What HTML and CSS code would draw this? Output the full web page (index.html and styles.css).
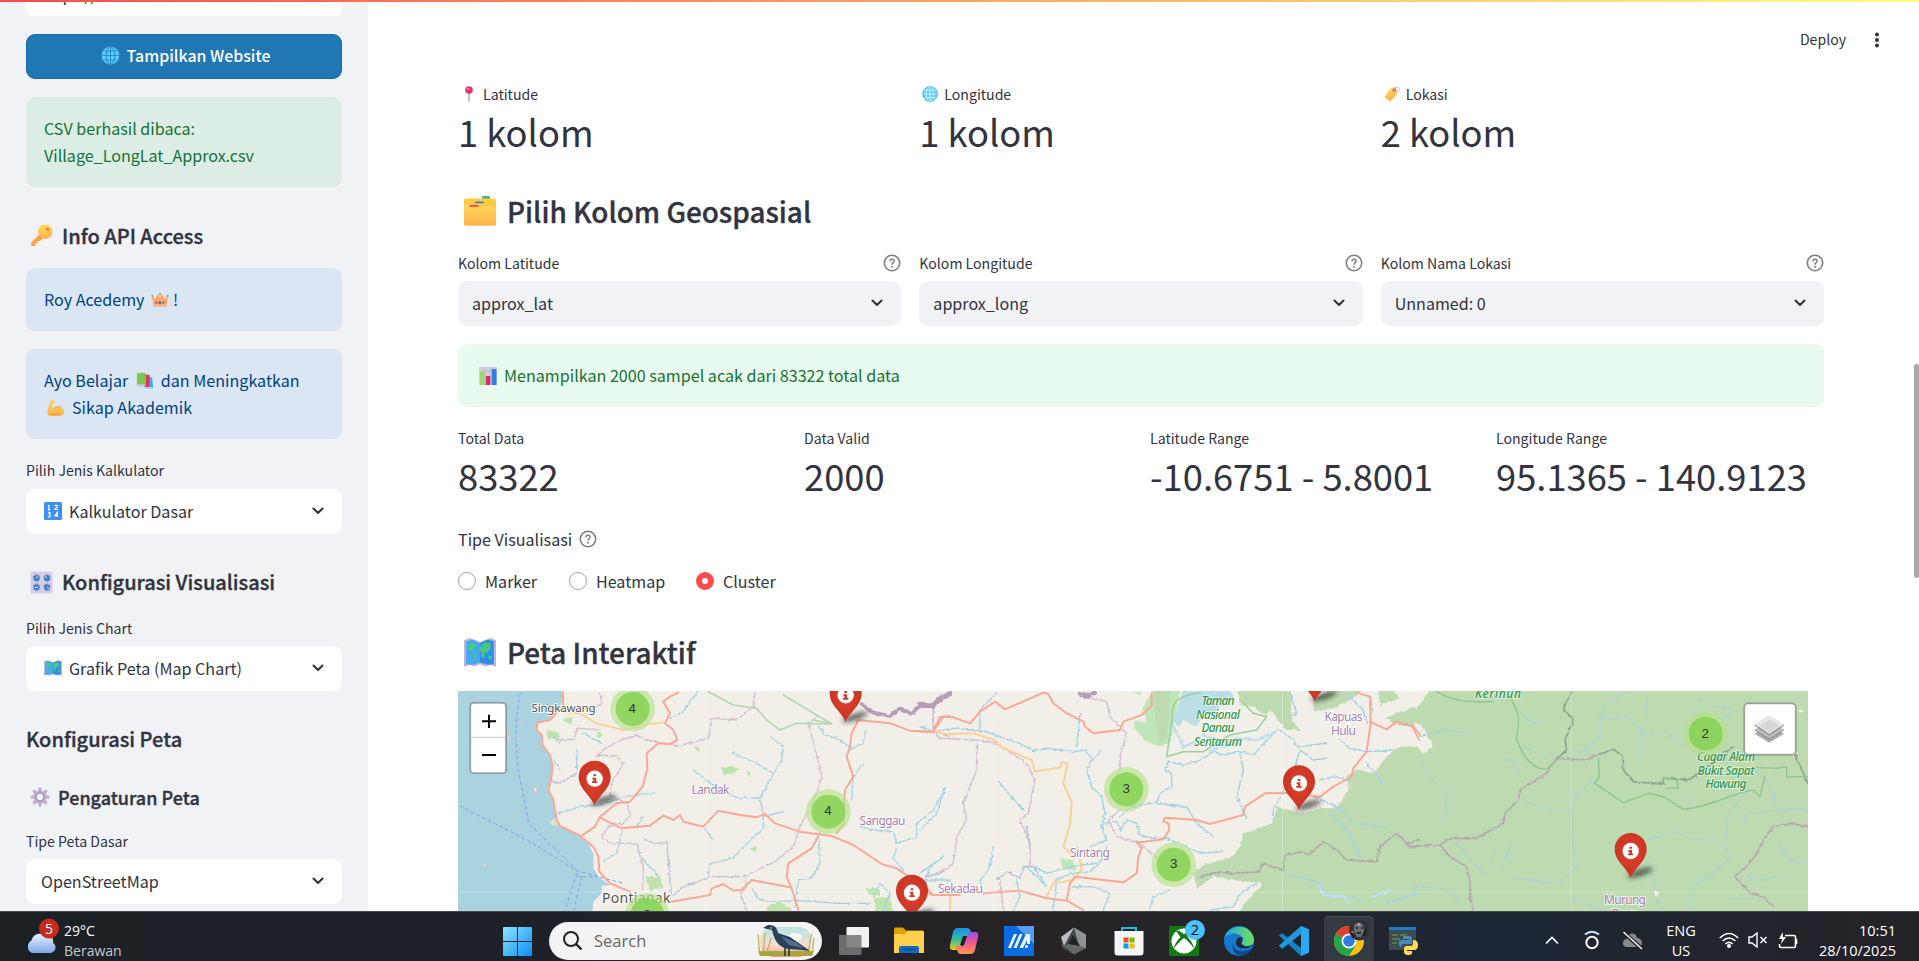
FILE: index.html
```html
<!DOCTYPE html>
<html lang="id">
<head>
<meta charset="utf-8">
<title>Peta Interaktif</title>
<link rel="stylesheet" href="styles.css">
</head>
<body>
<svg class="defs" width="0" height="0">
  <defs>
    <linearGradient id="gold" x1="0" y1="0" x2="0" y2="1"><stop offset="0" stop-color="#ffd85a"/><stop offset="1" stop-color="#ffb14e"/></linearGradient>
    <linearGradient id="winb" x1="0" y1="0" x2="1" y2="1"><stop offset="0" stop-color="#8be4ff"/><stop offset="1" stop-color="#0a8ff5"/></linearGradient>
    <linearGradient id="cop" x1="0" y1="0" x2="0" y2="1"><stop offset="0" stop-color="#1a8df0"/><stop offset=".5" stop-color="#2fbf9c"/><stop offset="1" stop-color="#f2c21b"/></linearGradient>
    <linearGradient id="cop2" x1="0" y1="0" x2="0" y2="1"><stop offset="0" stop-color="#a04df0"/><stop offset=".5" stop-color="#ee5a8e"/><stop offset="1" stop-color="#ff9a4a"/></linearGradient>
    <linearGradient id="edge" x1="0" y1="0" x2="1" y2="0"><stop offset="0" stop-color="#1fa7e0"/><stop offset="1" stop-color="#6fe05a"/></linearGradient>
    <linearGradient id="cloud" x1="0" y1="0" x2="0" y2="1"><stop offset="0" stop-color="#e8f1ff"/><stop offset="1" stop-color="#7fa9ea"/></linearGradient>
    <linearGradient id="sky" x1="0" y1="0" x2="0" y2="1"><stop offset="0" stop-color="#b5e6e3"/><stop offset=".6" stop-color="#f3ded0"/><stop offset="1" stop-color="#ef9d86"/></linearGradient>
    <symbol id="globe" viewBox="0 0 20 20"><circle cx="10" cy="10" r="9.4" fill="#5ccbfc"/><g fill="none" stroke="#d4f2ff" stroke-width="1.1"><ellipse cx="10" cy="10" rx="4.6" ry="9"/><path d="M10 1v18M1 10h18M2.5 5.3h15M2.5 14.7h15"/></g><circle cx="10" cy="10" r="9.2" fill="none" stroke="#38a9e4" stroke-width=".8"/></symbol>
    <symbol id="globe-dark" viewBox="0 0 20 20"><circle cx="10" cy="10" r="9.4" fill="#5ccbfc"/><g fill="none" stroke="#2a8fd0" stroke-width="1.1"><ellipse cx="10" cy="10" rx="4.6" ry="9"/><path d="M10 1v18M1 10h18M2.5 5.3h15M2.5 14.7h15"/></g></symbol>
    <symbol id="key" viewBox="0 0 24 24"><path d="M11.5 9.5 1 19.6 1.6 23h3.8v-2.8h2.4v-2.4h2.6l4-4z" fill="#ff9f45"/><circle cx="16" cy="8" r="7.6" fill="url(#gold)"/><circle cx="18.4" cy="5.4" r="1.7" fill="#d98a2e"/></symbol>
    <symbol id="crown" viewBox="0 0 20 18"><path d="M1 5 5 8 7 3 10 6 13 3 15 8 19 5 17 16H3z" fill="#f7a95c"/><path d="M3 14h14v2.6H3z" fill="#ffb38f"/><g fill="#e33b6b"><circle cx="6" cy="12" r="1.2"/><circle cx="14" cy="12" r="1.2"/></g><g fill="#d98a5c"><circle cx="1.5" cy="4.5" r="1.2"/><circle cx="18.5" cy="4.5" r="1.2"/><circle cx="10" cy="2.5" r="1.3"/></g><circle cx="10" cy="12" r="1.7" fill="#3f6fe6"/></symbol>
    <symbol id="books" viewBox="0 0 20 20"><path d="M11 5l7 1 1 12-8 1z" fill="#3fa9ea"/><path d="M10 3h5v13l-6 1z" fill="#e5305f"/><path d="M1 1h10v13H1z" fill="#7bc950"/><path d="M1 14h10l-1 2H2z" fill="#c9c2d6"/><path d="M9 17h9v1.6H9z" fill="#cfdcf5"/></symbol>
    <symbol id="arm" viewBox="0 0 20 20"><path d="M4 2C6 0 9 1 9 3L8 5l-2 .6L6 12c2-3 7-5 11-2 4 4 2 9-5 9H4c-4 0-4-4-3-8z" fill="url(#gold)"/><path d="M7 12c1-3 5-4 8-3M3 16c3 2 8 2 11 0" fill="none" stroke="#ee8f38" stroke-width="1"/></symbol>
    <symbol id="nums" viewBox="0 0 18 18"><rect width="18" height="18" rx="1.5" fill="#3f8ff3"/><path d="M5 3v4.6M4 4l1-.9M3.900 7.600h2.200M11 4c0-1.300 2.800-1.300 2.600.2 0 1-2.300 2-2.600 3.300h2.900M4 10.600c3-.8 2.500 2 .8 2.100 2.300 0 1.700 3-.9 2.300M13.300 15v-4.700l-2.400 3.300h3.200" fill="none" stroke="#fff" stroke-width="1.200"/></symbol>
    <symbol id="knobs" viewBox="0 0 24 24"><rect x=".5" y=".5" width="23" height="23" rx="2" fill="#d9cbe6"/><g fill="none" stroke="#6b5e80" stroke-width="1" stroke-dasharray="1 1.2"><path d="M3.400 6a4 4 0 0 1 7 0M14.200 6a4 4 0 0 1 7 0M3.400 15.500a4 4 0 0 1 7 0M14.200 15.500a4 4 0 0 1 7 0"/></g><g fill="#3c86d0"><circle cx="6.800" cy="7.600" r="3.300"/><circle cx="17.800" cy="7.600" r="3.300"/><circle cx="6.800" cy="17.200" r="3.300"/><circle cx="17.800" cy="17.200" r="3.300"/></g><path d="m6.500 7 2-1M17.500 7l-2-1.500M5 17.200h3M18 17l2 1.500" stroke="#fff"/></symbol>
    <symbol id="worldmap" viewBox="0 0 30 26" preserveAspectRatio="none"><path d="M0 2 5.500 0 10 1.500 15 3.500 20 1.500 25 0 30 2V26L25 24 20 25.500 15 23.500 10 25.500 5 24 0 26z" fill="#c2b2da"/><path d="M2 3 8 1.500 15 4.500V22L8 24 2 23.500z" fill="#44a9f3"/><path d="M15 4.500 22 1.500 28 3V23.500L22 24 15 22z" fill="#2b8ee8"/><path d="M3 6.500 7 4l5 2-2 4-3 2-3-2zM9 13l3 2-1.500 4L9 20.500zM15 8l4-4 6 1v4l-3 5-2-3-1 8-3-3 .500-3.500-2-1zM23 16h3v3l-3-.500z" fill="#47c885"/></symbol>
    <symbol id="gear" viewBox="0 0 22 22"><g stroke="#c3b5d3" stroke-width="4" stroke-linecap="round"><path d="M11 2.200v17.600M2.200 11h17.600M4.800 4.800l12.400 12.400M17.200 4.800 4.800 17.200"/></g><circle cx="11" cy="11" r="7" fill="#b9aaca"/><circle cx="11" cy="11" r="4.600" fill="#958aa3"/><circle cx="11" cy="11" r="3.500" fill="#f0f2f6"/></symbol>
    <symbol id="pin" viewBox="0 0 12 22"><path d="M6 9v12.500" stroke="#9a8da8" stroke-width="1.500"/><circle cx="6" cy="5.500" r="5.200" fill="#e8326d"/><circle cx="4.500" cy="4" r="1.600" fill="#ff80aa"/></symbol>
    <symbol id="tag" viewBox="0 0 18 18"><path d="M7 3 12 1l3 3-1 6-7 7.500-6.500-5z" fill="url(#gold)"/><circle cx="11.500" cy="4.500" r="2" fill="#e3536b"/><circle cx="14.600" cy="4" r="2.800" fill="none" stroke="#c7b5d6" stroke-width="1"/></symbol>
    <symbol id="folder" viewBox="0 0 32 30" preserveAspectRatio="none"><rect x="18" y="0" width="8" height="5" rx="1" fill="#46b978"/><rect x="0" y="2.500" width="32" height="27" rx="2" fill="#ffcb45"/><path d="M12 5.500h7l1.500 1.700h-10z" fill="#3b83d4"/><path d="M0 9h5l1.500 1.500H32v17a2 2 0 0 1-2 2H2a2 2 0 0 1-2-2z" fill="url(#gold)"/><path d="M6 9h8l1 1.700H5z" fill="#ef4056"/></symbol>
    <symbol id="chart" viewBox="0 0 18 18"><rect width="18" height="18" fill="#d6cde0"/><path d="M0 4h18M6 0v18M12 0v18" stroke="#b9acc9" stroke-width=".6"/><rect x="1" y="4.500" width="4.500" height="13.500" fill="#99dd68"/><rect x="6.800" y="9" width="4.500" height="9" fill="#d92d67"/><rect x="12.800" y="2" width="4.700" height="16" fill="#2b83df"/></symbol>
    <symbol id="chev" viewBox="0 0 12 8"><path d="M1.500 1.500 6 6l4.500-4.500" fill="none" stroke="#31333f" stroke-width="2.100" stroke-linecap="round" stroke-linejoin="round"/></symbol>
    <symbol id="help" viewBox="0 0 18 18"><circle cx="9" cy="9" r="7.700" fill="none" stroke="#7c7d86" stroke-width="1.600"/><path d="M6.900 7.200c.1-2.800 4.300-2.600 4.200-.1-.1 1.600-2 1.600-2.100 3.500" fill="none" stroke="#7c7d86" stroke-width="1.500"/><circle cx="9" cy="12.700" r="1" fill="#7c7d86"/></symbol>
    <filter id="wig" x="-5%" y="-5%" width="110%" height="110%" color-interpolation-filters="sRGB"><feTurbulence type="fractalNoise" baseFrequency=".09" numOctaves="3" seed="4"/><feDisplacementMap in="SourceGraphic" scale="11" xChannelSelector="R" yChannelSelector="G"/></filter>
    <filter id="soft" x="-50%" y="-100%" width="200%" height="300%"><feGaussianBlur stdDeviation="8"/></filter>
    <radialGradient id="red" cx=".5" cy=".45" r=".6"><stop offset="0" stop-color="#db422e"/><stop offset="1" stop-color="#c8321f"/></radialGradient>
    <g id="mk"><ellipse cx="28" cy="-15" rx="40" ry="10" transform="rotate(-18 28 -15)" fill="#222" opacity=".7" filter="url(#soft)"/><path d="M0 0C-12-30-48-50-48-86A48 48 0 0 1 48-86C48-50 12-30 0 0z" fill="url(#red)"/><circle cy="-80" r="24.500" fill="#fff"/><path d="M-4-93h8v6h-8zM-7-83H4v11h4v5H-8v-5h4v-6h-3z" fill="#d03a28"/></g>
    <g id="cl"><circle r="67" fill="#b5e28c" opacity=".65"/><circle r="51" fill="#84d250" opacity=".82"/></g>
  </defs>
</svg>

<div class="stripe"></div>
<div class="app">
  <aside class="sidebar">
    <div class="cut"><span>https://</span></div>
    <div class="button"><svg class="e19"><use href="#globe-dark"/></svg><b>Tampilkan Website</b></div>
    <div class="alert ok">CSV berhasil dibaca:<br>Village_LongLat_Approx.csv</div>
    <h3 class="h-info"><svg class="e24"><use href="#key"/></svg>Info API Access</h3>
    <div class="alert info">Roy Acedemy <svg class="e18 crown"><use href="#crown"/></svg>!</div>
    <div class="alert info">Ayo Belajar <svg class="e18 book"><use href="#books"/></svg>dan Meningkatkan<br><svg class="e18 arm"><use href="#arm"/></svg>Sikap Akademik</div>
    <label class="l1">Pilih Jenis Kalkulator</label>
    <div class="select white ico"><svg class="e18"><use href="#nums"/></svg><span>Kalkulator Dasar</span><svg class="chev"><use href="#chev"/></svg></div>
    <h3 class="h-vis"><svg class="e24"><use href="#knobs"/></svg>Konfigurasi Visualisasi</h3>
    <label class="l2">Pilih Jenis Chart</label>
    <div class="select white ico"><svg class="e18"><use href="#worldmap" y="1" height="16"/></svg><span>Grafik Peta (Map Chart)</span><svg class="chev"><use href="#chev"/></svg></div>
    <h3 class="h-peta">Konfigurasi Peta</h3>
    <h4><svg class="e20"><use href="#gear"/></svg>Pengaturan Peta</h4>
    <label class="l3">Tipe Peta Dasar</label>
    <div class="select white"><span>OpenStreetMap</span><svg class="chev"><use href="#chev"/></svg></div>
  </aside>

  <main class="main">
    <header><span>Deploy</span><svg width="6" height="16"><g fill="#31333f"><circle cx="3" cy="2.500" r="2"/><circle cx="3" cy="8" r="2"/><circle cx="3" cy="13.500" r="2"/></g></svg></header>
    <section class="content">
      <div class="cols3 metrics top">
        <div><p><svg class="m"><use href="#pin"/></svg>Latitude</p><strong>1 kolom</strong></div>
        <div><p><svg class="m"><use href="#globe"/></svg>Longitude</p><strong>1 kolom</strong></div>
        <div><p><svg class="m"><use href="#tag"/></svg>Lokasi</p><strong>2 kolom</strong></div>
      </div>
      <h2><svg width="32" height="30"><use href="#folder"/></svg>Pilih Kolom Geospasial</h2>
      <div class="cols3 picks">
        <div><label>Kolom Latitude<svg class="help"><use href="#help"/></svg></label><div class="select"><span>approx_lat</span><svg class="chev"><use href="#chev"/></svg></div></div>
        <div><label>Kolom Longitude<svg class="help"><use href="#help"/></svg></label><div class="select"><span>approx_long</span><svg class="chev"><use href="#chev"/></svg></div></div>
        <div><label>Kolom Nama Lokasi<svg class="help"><use href="#help"/></svg></label><div class="select"><span>Unnamed: 0</span><svg class="chev"><use href="#chev"/></svg></div></div>
      </div>
      <div class="alert sample"><svg class="e18"><use href="#chart"/></svg><span>Menampilkan 2000 sampel acak dari 83322 total data</span></div>
      <div class="cols4 metrics">
        <div><p>Total Data</p><strong>83322</strong></div>
        <div><p>Data Valid</p><strong>2000</strong></div>
        <div><p>Latitude Range</p><strong>-10.6751 - 5.8001</strong></div>
        <div><p>Longitude Range</p><strong>95.1365 - 140.9123</strong></div>
      </div>
      <div class="tipe">Tipe Visualisasi<svg class="help"><use href="#help"/></svg></div>
      <div class="radios"><span class="r1"><i></i>Marker</span><span class="r2"><i></i>Heatmap</span><span><i class="on"></i>Cluster</span></div>
      <h2 class="peta"><svg width="32" height="29"><use href="#worldmap"/></svg>Peta Interaktif</h2>

      <svg class="map" viewBox="458 691 1350 220">
        <rect x="458" y="691" width="1350" height="220" fill="#f2efe9"/>
        <g transform="translate(450 680) scale(.33333)" fill="none" stroke-linejoin="round" stroke-linecap="round">
          <path d="M0 0H332L338 60 325 95 300 118 262 126 258 150 276 165 278 195 300 225 308 260 303 295 295 330 310 360 316 408 325 438 390 467 418 495 430 522 430 565 447 592 480 615 455 618 455 640 430 665 426 720H0z" fill="#aad3df"/>
          <path d="M300 425l16-12 8 22-20 2z" fill="#d5e8c8"/>
          <g fill="#e9e0dc" stroke="#d9b9c4" stroke-width="2"><circle cx="213" cy="127" r="4"/><path d="M170 150l8 20 2 15-6-3zM250 325l8-5 4 12-6 8zM188 408l5-3v8z"/><circle cx="104" cy="556" r="4"/><circle cx="203" cy="175" r="4"/></g>
          <g fill="#bfe3ad" filter="url(#wig)"><path d="M288 150l40 8-5 20-30-3zM340 112l28 2-5 18-20-3zM440 155l20 5-6 14-14-4zM900 500l22 2-8 14zM586 590l45 0 8 35-40 5zM735 200h14v14h-14zM815 265l40-8 15 12-15 8-35 8zM893 268l12 20h-12zM950 680l40-15 35 25v30h-75zM1250 625l40 0v20h-35zM1270 655l50-5 10 50h-50z"/><path d="M520 50l50-20 10 60-40 10z"/></g>
          <g stroke="#89a0ee" stroke-width="3" stroke-dasharray="9 10"><path d="M211 40C195 120 195 200 205 270L236 430 380 570M30 378L240 485 380 572 520 610M380 580 345 690M395 590 372 690M380 590h60"/></g>
          <g stroke="#a5d3e3" stroke-width="4" filter="url(#wig)">
            <path d="M745 35L720 65 700 95 660 115M520 48L560 80M400 160l55 30M310 170l20 20M315 240l15 30M380 210v60M325 400L400 378 450 375 520 350 615 338M460 545l40-25 15-65M560 440l20-30M570 530l60 60M730 270L780 310 830 340 860 352 930 354M845 217L930 255 970 282M962 170L1000 200 995 240 960 300 930 355 940 400 940 445 880 500 850 535 780 550 775 590M940 410L1000 395M1105 470L1110 550 1085 595 1045 600 1035 680M765 445L788 480M1105 140L1125 165 1160 175 1205 205 1240 190 1248 150M1240 250L1210 290 1205 360M1230 440L1270 450 1330 455 1340 490 1400 470 1400 430 1450 390 1485 325M1340 500L1330 535 1360 570M1430 580L1430 610 1360 640M1480 530L1440 560 1430 590M1270 650L1290 610 1320 640 1300 690M905 625L930 660 980 665 1040 662 1100 665 1160 670 1260 670M1480 570L1440 590"/>
          </g>
          <g stroke="#b9c0d9" stroke-width="4" filter="url(#wig)"><path d="M665 650L700 620 770 595M300 300L330 310 380 280M650 490L660 600 665 650"/></g>
          <g stroke="#d3bfd0" stroke-width="4" filter="url(#wig)"><path d="M450 40L455 70 410 100M320 180L375 178 380 145 450 150M440 230L460 210 500 185 560 165 590 180 680 198 775 175 785 115 860 120 910 80 915 30M440 225L500 228 520 250 485 310 480 345 530 370 542 405 520 430 480 435 455 470 480 490 560 490 580 560 578 630M580 475L610 490 650 488M775 590L880 590 975 545 1030 500 1050 440 1100 340 1115 290 1095 205 1075 130 1100 110M885 590L890 620 870 640 890 690M1450 80v70l50 20"/></g>
          <g stroke="#b2d9b2" stroke-width="5"><path d="M775 35L850 75 920 85 950 120 990 150 1040 130 1145 132 1000 45M1145 132L1090 120"/></g>
          <path d="M1235 72L1270 98 1320 108 1350 85 1385 102 1415 70 1450 80 1465 55 1500 40" stroke="#b79db7" stroke-width="11" filter="url(#wig)"/>
          <g stroke="#fbcf90" stroke-width="5"><path d="M330 95L390 100 440 130 520 150 600 132 640 128"/></g>
          <g stroke="#f8a896" stroke-width="6"><path d="M338 35L340 75 300 120 262 128 260 150 275 165 278 195 300 225 308 260 303 300 295 330 310 360 320 420 330 438 390 467 430 500 445 530 448 575 480 610 540 635M685 38L660 50 640 65 660 100 645 130 670 150 682 180 660 192 625 190 590 220 592 265 578 320 540 365 500 370 450 410 435 440 395 467M450 413L515 445 600 437 640 407 670 420 690 405 700 425 760 440 805 392 870 405 920 412 945 402 975 430 1050 455 1145 468 1210 495 1295 552 1340 565 1390 600 1445 645M1110 460L1085 505 1015 550 1010 590 1030 640 1045 690M665 665L780 645 785 625 820 612 850 632 875 630 905 600 1020 622M1500 108L1480 110 1450 155 1380 152 1320 130 1225 120 1205 160 1200 200 1190 230 1210 290 1185 330 1182 370 1182 430 1160 460"/></g>
        </g>
        <g transform="translate(920 680) scale(.33333)" fill="none" stroke-linejoin="round" stroke-linecap="round">
          <g fill="#bddab1" filter="url(#wig)"><path d="M940-40H1110L1115 120 1140 150 1095 150 1050 85 1040 110 1000 80 960 75zM1180 60L1230 30H1330L1290 60 1240 85 1180 95zM1370-40H2700V760H940L965 680 1030 610 940 600 880 590 830 625 820 580 850 555 940 530 960 500 970 460 1060 430 1070 380 1150 400 1200 385 1250 385 1285 330 1280 290 1310 270 1360 285 1400 230 1450 195 1500 200 1500 130 1450 125 1400 115 1450 95 1480 80 1490 50 1440 55 1380 75z"/></g>
          <path d="M1425 390L1350 340 1285 290 1310 268 1360 280 1400 240z" fill="#bddab1"/>
          <path d="M700 30H780L750 190 720 200 680 185 640 140 645 120 680 130 670 80zM420 535l40 5 10 30-40 0zM640 35h25l-5 12z" fill="#bfe6b8" filter="url(#wig)"/>
          <path d="M700 30h50l-8 140-25 20-10-60z" fill="#bddab1"/>
          <path d="M790 30L930 30 945 60 900 75 890 110 850 95 830 140 790 120 775 140 760 120z" fill="#aed9e3" filter="url(#wig)" opacity=".8"/>
          <path d="M1370 115L1480 120 1515 150 1540 200 1500 230 1420 205 1350 225 1360 120zM1420 30h110l-40 55-30-10-20-20z" fill="#f2efe9" filter="url(#wig)"/>
          <path d="M1395 115l50-22 40 15v30h-40zM1400 230l40-30 50 0 30 30-60 40z" fill="#bddab1" filter="url(#wig)"/>
          <g stroke="#a5d3e3" stroke-width="4.500" filter="url(#wig)">
            <path d="M0 140L40 155 100 145 200 155 250 175 300 190 340 212 380 205 460 215 500 210 515 240 500 270 515 320 545 350 555 400 545 440 560 480 510 500M230 40L180 90 180 150M480 100L470 200M545 210L520 240M235 305L270 345 310 390M75 325L50 400 0 450M555 430L590 425 600 450 620 420 650 430 660 465 700 475 740 475 800 500 840 520 910 515M0 580L70 530M10 600L90 600M220 500L210 560 180 605 190 640M600 410L630 380 690 370 800 380 830 430 880 470M710 370L720 340 755 320 755 280 735 270 745 245 790 255 840 240 880 215 910 225 960 215 1000 225 1070 150M960 220L970 270 950 350 980 415M1080 150L1120 180 1140 210 1125 260 1120 310M1140 210L1180 240 1220 235M1110 40L1130 100 1110 110M1140 200L1220 190M1110 300L1060 390 1060 440M1200 300L1240 290 1300 300M1260 180L1290 205 1340 215 1420 210M1180 350L1250 380 1300 430 1400 440M1230 400L1290 460 1320 530M1340 250L1390 310M1090 585L1140 590 1200 610 1220 650 1290 650 1330 670M750 630L700 650 690 690M1010 610L960 640 940 680 870 690M290 600L300 650 280 690M400 690L410 600 450 580 510 575 540 550 560 500M460 620L520 620 570 640 550 690M320 560L380 620 340 560 380 580 450 560 530 550M1400 670L1500 640M1350 50L1360 100M1280 40L1330 90 1340 130"/>
          </g>
          <path d="M850 165L900 190 950 175 1010 180 1060 160M870 215L900 200 960 190M760 140l30 60 50-20M1195 620l20 25 60 5 10 20M1360 650l50-20" stroke="#bfe0ea" stroke-width="8" filter="url(#wig)"/>
          <g stroke="#d3bfd0" stroke-width="4.500" filter="url(#wig)"><path d="M40 90L40 150 60 175 170 180 230 190 320 250 345 300 325 400 300 420 330 490 330 560M170 190L170 270 130 370 140 420 110 470 100 550 60 580 20 590M485 50L560 65 570 110 620 160 600 230 600 270M600 390L565 420 590 470 660 490 720 540M240 600L250 690"/></g>
          <path d="M840 590L900 575 940 580 1020 575 1025 550 1090 570 1095 525 1150 515 1165 525 1210 485 1250 510 1280 540 1370 545 1380 500 1430 460 1460 490 1500 480" stroke="#b1aaa9" stroke-width="5" filter="url(#wig)"/>
          <path d="M230 600L265 575 300 595 310 560 345 560M320 440L330 500" stroke="#b9c0d9" stroke-width="5" filter="url(#wig)"/>
          <path d="M0 72L20 80 40 75 90 40M480 40L495 50 525 38" stroke="#b79db7" stroke-width="13" filter="url(#wig)"/>
          <g stroke="#9bcea0" stroke-width="4.500"><path d="M840 38C740 50 760 90 755 130L740 230 790 215 850 215 890 190 930 165 1010 150 1040 110 1000 100 970 70"/></g>
          <g stroke="#fbcf90" stroke-width="5.500"><path d="M40 155L80 162 160 160 225 180 240 200 335 240 345 275 420 262 425 247 443 250 430 310 455 365 450 435 430 500 450 520M480 540L485 570 460 600 400 610 380 650M90 640L90 690"/></g>
          <g stroke="#f8a896" stroke-width="6"><path d="M0 155H40L60 110 100 112 150 130 180 95 225 65 255 88 370 38 385 42 400 70 435 97 490 125 495 140 520 160 600 150 610 125 665 105 695 78 695 40M0 605L40 645 120 645M190 640L300 632 380 655 440 662 450 610 465 590 530 598 610 607 650 580 655 530 665 505 650 488 730 478 748 450 745 430 730 425 735 413 830 420 870 432 970 405 975 380 1035 340 1100 338 1200 350 1240 320 1295 290 1300 265 1340 215 1352 130 1350 50 1310 38M1350 125L1400 148 1430 125 1480 140 1500 165M440 662L490 690"/></g>
        </g>
        <g transform="translate(1400 680) scale(.33333)" fill="none" stroke-linejoin="round" stroke-linecap="round">
          <path d="M0 130L35 137 58 180" stroke="#f8a896" stroke-width="5"/>
          <g stroke="#add3d2" stroke-width="4" filter="url(#wig)"><path d="M60 170L130 150 220 160M60 240L90 290 135 330 140 390 125 430M370 110L400 130 430 120M370 200L440 235M480 215L550 215 600 170 600 120 680 110 740 160 800 160 850 195M600 110L620 70 680 40M740 50L740 110M720 150L720 240M900 60L930 75 990 85M960 120L1010 90M370 360L440 390 480 395 510 390 530 340 590 300M520 400L520 500 540 550 500 590 480 610 400 600 340 595M170 490L230 560 250 580M280 560L280 500M300 570L330 500M0 620L80 620 160 640 180 680M500 650L560 670 600 690M740 540L760 590 760 640 790 690M740 480L830 455 880 480 920 475 970 490 990 530 960 560M960 560L930 590 870 620 870 690M980 480L980 410 1040 335M1060 270L1110 310 1130 380 1220 390M1030 430L1040 400 1180 390M1040 590L1100 600 1160 580M1140 500L1170 540 1220 550M980 655L1060 655M870 350V400M310 240L340 240 360 290"/></g>
          <g stroke="#b8a7b1" stroke-width="5" filter="url(#wig)"><path d="M0 470L30 500 120 495 150 475 230 475 310 430 315 400 355 360 360 330 440 280 470 235 560 240 600 220M120 495L150 530 200 560 210 610 210 650 220 690M1224 440L1170 430 1120 440 1090 480 1070 520 1040 560 1005 590 1050 640 1090 650 1120 680"/></g>
          <path d="M515 35L490 85 520 120 495 180 500 210 470 235M600 222L640 208 670 230 670 270 700 305 790 312 790 295 820 295 860 300 900 280 970 220 1000 200M1185 225L1224 310" stroke="#8fa68e" stroke-width="5.500" filter="url(#wig)"/>
          <path d="M110 35C170 70 220 65 280 65M335 60C370 120 350 140 350 180C370 230 400 270 440 268L470 240M595 235L598 290 585 310 670 368 745 340 790 350 850 388C940 380 990 340 1060 330L1080 350 1095 290M1060 262L1130 265 1160 260 1160 290 1224 290M790 295L830 300 835 325 800 325" stroke="#8fc88f" stroke-width="4.500"/>
          <path d="M760 632l18 4-10 18zM1190 90h22l-6 8z" fill="#f2efe9"/>
        </g>
        <path d="M706 691v220M994.500 691v220M1282.500 691v220M1571 691v220M458 892h1350" stroke="#fff" stroke-opacity=".25" stroke-width="1"/>
        <g class="places">
          <g class="city"><text x="531.500" y="711.500" textLength="64">Singkawang</text><text class="big" x="602" y="902.500" textLength="68.500">Pontianak</text></g>
          <g class="district" text-anchor="middle"><text x="710.500" y="793.500" textLength="38">Landak</text><text x="882.500" y="825" textLength="46">Sanggau</text><text x="1090" y="857" textLength="40">Sintang</text><text x="960.500" y="893" textLength="45">Sekadau</text><text x="1343.500" y="721" textLength="38">Kapuas</text><text x="1343.500" y="734.500" textLength="25">Hulu</text><text x="1625" y="904" textLength="42">Murung</text><text x="1625" y="918">Raya</text></g>
          <g class="park" text-anchor="middle"><text x="1218" y="705" textLength="33">Taman</text><text x="1218" y="718.500" textLength="44">Nasional</text><text x="1218" y="732" textLength="33">Danau</text><text x="1218" y="745.500" textLength="48">Sentarum</text><text x="1498" y="697.500" textLength="46">Kerihun</text><text x="1726" y="761" textLength="58">Cagar Alam</text><text x="1726" y="774.500" textLength="57">Bukit Sapat</text><text x="1726" y="788" textLength="41">Hawung</text></g>
        </g>
        <g transform="translate(450 680) scale(.33333)">
          <use href="#cl" x="548" y="87"/><use href="#cl" x="1135" y="395"/><use href="#cl" x="592" y="706"/><use href="#cl" x="2029" y="328"/><use href="#cl" x="2171" y="554"/><use href="#cl" x="3767" y="161"/>
          <g class="count"><text x="547" y="99">4</text><text x="1134" y="405">4</text><text x="592" y="716">8</text><text x="2029" y="339">3</text><text x="2171" y="565">3</text><text x="3766" y="174">2</text></g>
          <use href="#mk" x="434" y="376"/><use href="#mk" x="1187" y="126"/><use href="#mk" x="1386" y="718"/><use href="#mk" x="2547" y="390"/><use href="#mk" x="2594" y="64"/><use href="#mk" x="3542" y="593"/>
          <rect x="61" y="69" width="107" height="210" rx="10" fill="#fff" stroke="#00000055" stroke-width="5"/><path d="M63 172h103" stroke="#ccc" stroke-width="3"/><path d="M96 124h42M117 104v40M96 225h42" stroke="#000" stroke-width="6"/>
          <rect x="3883" y="70" width="154" height="154" rx="12" fill="#fff" stroke="#00000055" stroke-width="5"/>
          <g transform="translate(3958 0)"><path d="M-44 161 0 132 44 161 0 188z" fill="#a9a9a9"/><path d="M-44 148 0 120 44 148 0 177z" fill="#bbb" stroke="#fff" stroke-width="3"/><path d="M-44 133 0 105 44 133 0 162z" fill="#e6e6e6"/><path d="M-30 137 0 119 30 137 0 156z" fill="#d6d6d6"/><path d="M-44 135 0 164 44 135M-44 149 0 177 44 149" fill="none" stroke="#777" stroke-width="3"/></g>
        </g>
      </svg>
    </section>
    <div class="scroll"></div>
  </main>
</div>

<footer class="taskbar">
  <div class="weather"><svg width="36" height="38" viewBox="0 0 36 38"><rect x="22" y="15" width="7" height="10" fill="#e78423"/><path d="M8 35a7 7 0 0 1-.5-12.500C9 15 19 13 22 20c7-1 8 4 7 5 5 3 2 10-3 10z" fill="url(#cloud)"/><circle cx="25" cy="10.500" r="10" fill="#c62b1c"/><text x="25" y="15.500" text-anchor="middle" class="five">5</text></svg><div>29°C<br><small>Berawan</small></div></div>
  <svg class="win" viewBox="0 0 29 29"><path d="M0 1q0-1 1-1h13v14H0zM15 0h13q1 0 1 1v13H15zM0 15h14v14H1q-1 0-1-1zM15 15h14v13q0 1-1 1H15z" fill="url(#winb)"/></svg>
  <div class="search"><svg width="20" height="20" viewBox="0 0 20 20"><circle cx="8" cy="8" r="7" fill="none" stroke="#222" stroke-width="2"/><path d="m13 13 5.500 5.500" stroke="#222" stroke-width="2.400"/></svg><span>Search</span>
    <svg width="58" height="34" viewBox="0 0 58 34"><rect x="3" y="3" width="52" height="30" rx="14" fill="url(#sky)"/><ellipse cx="38" cy="13" rx="7" ry="4" fill="#fff" opacity=".8"/><path d="M1 27h56l-2 5H3z" fill="#a7a53c"/><path d="M3 28C1 22 2 15 1 10M6 28C8 20 6 12 9 9M10 28l4-14M51 28c2-8 2-14 4-18M55 28c2-7 1-10 2-14" fill="none" stroke="#c8ae63" stroke-width="1.300"/><path d="M6 4 10 1.500C16 0 20 3 21 9l12 4 13 9 7 5-9-1-13-1C20 23 17 14 15 6z" fill="#2b405a"/><path d="M24 12 40 19 46 24 32 21z" fill="#53718b"/><path d="M28 24v8M32 24v8" stroke="#25313f" stroke-width="1.500"/><circle cx="14" cy="4" r="1" fill="#d49762"/></svg></div>
  <div class="apps">
    <span><svg viewBox="0 0 30 28"><rect x="7.500" width="22.500" height="20.500" rx="1" fill="#f2f2f2"/><rect y="8" width="22.500" height="20" rx="1" fill="#777" opacity=".88"/></svg></span>
    <span><svg viewBox="0 0 30 28"><path d="M0 2q0-1.500 1.500-1.500H9L12 3.500H28.500q1.500 0 1.500 2V14H0z" fill="#dea000"/><path d="M0 7H11l3-3H28.500q1.500 0 1.500 1.500V26H0z" fill="#ffd04d"/><path d="M5 26v-5q0-2 2-2h16q2 0 2 2v5z" fill="#0c6bc2"/><path d="M8.500 22.500h13" stroke="#04427d" stroke-width="1.200"/></svg></span>
    <span><svg viewBox="0 0 30 28"><path d="M9 1h9q3 0 4 4l1 4h-7l-5 12q-1 2-4 2H4q-4 0-3-5L4 5q1-4 5-4z" fill="url(#cop)"/><path d="M21 27h-9q-3 0-4-4l-1-4h7l5-12q1-2 4-2h3q4 0 3 5L26 23q-1 4-5 4z" fill="url(#cop2)"/><path d="M14 9h4l-3 9h-4z" fill="#20222b"/></svg></span>
    <span><svg viewBox="0 0 30 30"><rect width="30" height="30" fill="#0b6be0"/><path d="M12 0h18v18z" fill="#559fee"/><path d="M10 8h3L7 22H4zM15.500 8h3L12.500 22h-3zM22 8h4v10h-3v-4l-4 8h-3.500z" fill="#eaf3ff"/><circle cx="22.500" cy="20.500" r="1.500" fill="#fff"/></svg></span>
    <span><svg viewBox="0 0 30 30"><path d="M15 1.500 27 8.500V22L15 28.500 3 22 2 11z" fill="#44474b"/><path d="M15 1.500 27 8.500V22l-6 1z" fill="#8f9297"/><path d="M15 1.500 2 11 5 20z" fill="#b9bbbe"/><path d="M14 9 21 20 9 18z" fill="#202226"/><path d="m5 20 4-2 12 2 6 2-12 6.500z" fill="#63666a"/></svg></span>
    <span><svg viewBox="0 0 30 30"><path d="M8 7V2h14v5" fill="none" stroke="#25b7ea" stroke-width="2"/><path d="M.500 5h29v21q0 3.500-3 3.500h-23q-3 0-3-3.500z" fill="#f5f5f5"/><path d="M9.500 11.500h5v5h-5z" fill="#f04f23"/><path d="M15.500 11.500h5v5h-5z" fill="#7eb900"/><path d="M9.500 17.500h5v5h-5z" fill="#00a3ee"/><path d="M15.500 17.500h5v5h-5z" fill="#ffb700"/></svg></span>
    <span><svg class="xbox" viewBox="0 0 36 36"><rect y="6" width="30" height="30" rx="1.500" fill="#107c10"/><circle cx="15" cy="21" r="12.500" fill="#fff"/><path d="M7 11c3-1 6 1.500 8 3.200C17 12.500 20 10 23 11l-4.500 6c3.500 3.500 6 8 7 12C22 24 18 20 15 18c-3 2-7 6-10.500 11 1-4 3.500-8.500 7-12z" fill="#107c10"/><circle cx="26" cy="10" r="10" fill="#4cc2ff"/><text x="26" y="15" text-anchor="middle" class="two">2</text></svg></span>
    <span><svg viewBox="0 0 30 30"><circle cx="15" cy="15" r="15" fill="#1479d0"/><path d="M0 14C1-1 26-6 30 13c1 6-7 9-11 6-3-3 2-4-1-8C13 5 2 7 0 14z" fill="url(#edge)"/><path d="M10 15c-3 9 7 14 18 7-5 12-25 9-18-7z" fill="#114a8b"/><path d="M18 11c2 4-2 5 0 7.500 3 3 9 1.500 11 0-2 5-19 6-17-3 1-4 4-5 6-4.500z" fill="#20222b" opacity=".9"/></svg></span>
    <span><svg viewBox="0 0 30 30"><path d="M22 0 30 3.500V26.500L22 30 2 11.500 0 9.500 3 7 22 22z" fill="#1583c9"/><path d="M22 0 0 19.500 3 23 22 8z" fill="#1f9ae0"/><path d="M22 0 30 3.500V26.500L22 30z" fill="#2aa8f2"/></svg></span>
    <span class="active"><svg class="chrome" viewBox="0 0 36 36"><circle cx="15" cy="21" r="15" fill="#fbc116"/><path d="M15 21 2 13.500A15 15 0 0 1 28 13.500z" fill="#e33b2e"/><path d="M2 13.500A15 15 0 0 0 15 36l7-11-7-4z" fill="#27a34a"/><circle cx="15" cy="21" r="7.500" fill="#fff"/><circle cx="15" cy="21" r="5.800" fill="#2c7be5"/><circle cx="25.500" cy="10" r="10.500" fill="#303236"/><path d="M20 5q5-5 9 0l1 6-3 6h-4l-3-6z" fill="#6d6c70"/><path d="M22 8h2m3 0h2M23 13h4M17 13l3 4m12-7-2 6" stroke="#17181b" stroke-width="1.600" fill="none"/><circle cx="25" cy="4.500" r="1.500" fill="#a9a2a2"/><circle cx="18.500" cy="12" r="1.300" fill="#b85a51"/></svg></span>
    <span><svg viewBox="0 0 30 30"><path d="M0 1h27v23H0z" fill="#3f4b50"/><path d="M0 1h27v3H0z" fill="#1b7dcd"/><path d="M3 9h6M11 9h7M3 13h8M3 17h5" stroke="#548a4c" stroke-width="1.300"/><path d="M14 10h6q3 0 3 3v5h-8q-3 0-3 3h-1q-3-6 1-7h8v-1h-6z" fill="#4788bd"/><path d="M24 14q5 0 5 5t-4 5h-7v1h5v2q0 2-4 2t-4-3v-3q0-3 3-3h4q2 0 2-3z" fill="#ffdc50"/></svg></span>
  </div>
  <div class="tray">
    <svg width="14" height="10" viewBox="0 0 14 10"><path d="m1 8.500 6-6 6 6" fill="none" stroke="#fff" stroke-width="1.700"/></svg>
    <svg class="t-o" width="16" height="20" viewBox="0 0 16 20"><circle cx="8" cy="12.500" r="5.700" fill="none" stroke="#fff" stroke-width="2"/><path d="M1 4.500Q8-1 15 4.500" fill="none" stroke="#cfe4ff" stroke-width="2"/></svg>
    <svg class="t-c" width="22" height="19" viewBox="0 0 22 19"><path d="M5 16C-1 16 0 8 5 8 6 1 14 1 15 7c6 0 7 9 1 9z" fill="#88898c"/><path d="M1 1 20 18" stroke="#26262b" stroke-width="4"/><path d="M1.500 1 20 18" stroke="#fff" stroke-width="1.400"/></svg>
    <div class="lang">ENG<br>US</div>
    <svg class="t-w" width="20" height="17" viewBox="0 0 20 17"><g fill="none" stroke="#fff" stroke-width="1.600"><path d="M.8 6Q10-3 19.200 6M3.600 9q6.400-6 12.800 0M6.300 12q3.700-3.400 7.400 0"/></g><circle cx="10" cy="14" r="2" fill="#fff"/></svg>
    <svg class="t-v" width="20" height="16" viewBox="0 0 20 16"><path d="M1 5h3l5-4v14l-5-4H1z" fill="none" stroke="#fff" stroke-width="1.400"/><path d="m12.500 5 6 6m0-6-6 6" stroke="#fff" stroke-width="1.400"/></svg>
    <svg class="t-b" width="21" height="17" viewBox="0 0 21 17"><path d="M7 3.500h9q1.500 0 1.500 1.500v9q0 1.500-1.500 1.500H3q-1.500 0-1.500-1.500V12M18.500 7v5" fill="none" stroke="#fff" stroke-width="1.600"/><path d="M4.500 0 1 7h3l-1 5L8 5H5z" fill="#fff"/></svg>
    <div class="clock">10:51<br>28/10/2025</div>
  </div>
</footer>
</body>
</html>
```
FILE: styles.css
```css
* { box-sizing: border-box; }
body { margin: 0; width: 1919px; height: 961px; overflow: hidden; position: relative; background: #fff; color: #31333f; font: 16.1px/27px "Noto Sans CJK SC", "Noto Sans", sans-serif; }
svg { display: block; flex: none; }
.defs { position: absolute; }
.stripe { position: absolute; z-index: 2; top: 0; left: 0; width: 100%; height: 2px; background: linear-gradient(90deg, #ff4b4b, #fffd80); }
.app { display: flex; height: 911px; overflow: hidden; }
p { margin: 0; }
h2, h3, h4 { margin: 0; font-weight: 500; -webkit-text-stroke: .35px #31333f; }

.sidebar { width: 368px; padding: 0 26px; background: #f0f2f6; display: flex; flex-direction: column; overflow: hidden; }
.sidebar > * { flex: none; }
.cut { height: 16px; background: #fff; border-radius: 0 0 8px 8px; padding-left: 15px; display: flex; align-items: flex-start; }
.cut span { margin-top: -18px; line-height: 24px; }
.button { margin-top: 18px; height: 45px; border: 1px solid #1c6ba5; border-radius: 9px; background: #1f77b4; color: #fff; display: flex; align-items: center; justify-content: center; gap: 7px; padding: 0 0 2px 3px; }
.button b { font-weight: 500; font-size: 15.900px; }
.alert { border-radius: 9px; padding: 18px; }
.alert svg { display: inline-block; vertical-align: -3px; }
.button + .alert, .info + .info { margin-top: 18px; }
.ok { background: #dcede6; color: #177233; height: 90px; }
.info { background: #dbe6f4; color: #004280; }
.alert .crown { margin: 0 4px 0 3px; }
.alert .book { margin: 0 7px 0 4px; }
.alert .arm { margin: 0 7px 0 3px; }
.e18 { width: 18px; height: 18px; }
.e19 { width: 19px; height: 19px; }
.e20 { width: 20px; height: 20px; }
.e24 { width: 23px; height: 23px; }
h3 { font-size: 20.050px; line-height: 32px; height: 32px; padding-bottom: 2px; display: flex; align-items: center; }
h3 svg { margin: 0 9px 0 4px; }
h4 { font-size: 18px; line-height: 32px; height: 32px; padding-bottom: 2px; margin-top: 26px; display: flex; align-items: center; }
h4 svg { margin: 0 8px 0 4px; }
.h-info { margin: 34px 0 15px; padding-bottom: 3px; }
.h-vis { margin-top: 33px; }
.h-peta { margin-top: 33px; }
label { font-size: 14.1px; line-height: 22px; display: flex; align-items: center; justify-content: space-between; }
.l1 { margin: 20px 0 8px; }
.l2 { margin: 18px 0 7px; }
.l3 { margin: 16px 0 7px; }
.select { height: 45px; border-radius: 9px; background: #f0f2f6; display: flex; align-items: center; padding: 0 18px 1px 14px; }
.select.white { background: #fff; padding-left: 15px; }
.select.ico { padding-left: 18px; }
.select.ico span { margin-left: 7px; }
.chev { width: 12px; height: 8px; margin-left: auto; }

.main { flex: 1; position: relative; padding-left: 90px; }
header { height: 80px; display: flex; align-items: center; justify-content: flex-end; gap: 28px; padding: 0 39px 1px 0; font-size: 14.1px; }
.content { width: 1366px; }
.cols3 { display: grid; grid-template-columns: repeat(3, 1fr); gap: 18px; }
.cols4 { display: grid; grid-template-columns: repeat(4, 1fr); gap: 18px; }
.metrics p { font-size: 14.1px; line-height: 24px; display: flex; align-items: center; }
.metrics strong { display: block; font-weight: 400; font-size: 36.3px; line-height: 50px; white-space: nowrap; margin-bottom: 2px; }
.metrics.top { padding-top: 2px; }
.m { width: 16px; height: 16px; margin: 0 6px 0 3px; }
h2 { font-size: 27.900px; line-height: 40px; height: 40px; padding-bottom: 2px; display: flex; align-items: center; margin-top: 34px; }
h2 svg { margin: 0 11px 0 6px; }
.picks { margin-top: 20px; }
.picks label { margin-bottom: 7px; }
.help { width: 18px; height: 18px; }
.sample { margin-top: 18px; height: 63px; background: #e8f9ee; color: #177233; display: flex; align-items: center; padding: 0 0 0 21px; gap: 7px; }
.cols4 { margin-top: 19px; }
.tipe { margin-top: 23px; display: flex; align-items: center; gap: 7px; line-height: 28px; }
.radios { margin-top: 14px; display: flex; height: 28px; }
.radios span { display: flex; align-items: center; }
.radios i { width: 18px; height: 18px; border: 1px solid #a3a4aa; border-radius: 50%; margin-right: 9px; }
.radios .on { border: 6px solid #ff4b4b; }
.r1 { width: 111px; }
.r2 { width: 127px; }
h2.peta { margin-top: 38px; }
.map { width: 1350px; height: 220px; margin-top: 18px; }
.places text { font-family: "Noto Sans", sans-serif; font-size: 11.500px; paint-order: stroke; stroke: #ffffffaa; stroke-width: 2px; }
.city text { fill: #555; stroke: #ffffffcc; }
.places .city .big { font-size: 14px; }
.places .district text { fill: #a783ae; font-size: 12px; }
.places .park text { fill: #35994a; font-style: italic; font-weight: 500; font-size: 12px; stroke: #ffffff77; }
.count text { font: 40px "Liberation Sans", sans-serif; fill: #333; text-anchor: middle; }
.scroll { position: absolute; right: 0; top: 364px; width: 5px; height: 214px; border-radius: 3px; background: #a8a9ad; }

.taskbar { height: 50px; background: linear-gradient(90deg, #1c2126, #1e2128 30%, #272325 55%, #1c2734 78%, #242227); border-top: 1px solid #444a50; color: #fff; display: flex; align-items: flex-start; font: 14.500px/20px "Open Sans", sans-serif; }
.weather { width: 503px; display: flex; padding: 6px 0 0 24px; gap: 4px; }
.weather div { padding-top: 3px; font-size: 14px; }
.weather small { font-size: 14px; color: #c6c8ca; }
.five { font: 14px "Open Sans", sans-serif; fill: #fff; }
.two { font: 14.500px "Open Sans", sans-serif; fill: #111; }
.win { width: 29px; height: 29px; margin: 15px 17px 0 0; }
.search { width: 273px; height: 38px; margin-top: 10px; border-radius: 19px; background: #f3f3f3; color: #666; display: flex; align-items: center; padding-left: 14px; font-size: 16.500px; }
.search span { margin-left: 11px; flex: 1; }
.search svg:last-child { margin-right: 7px; }
.apps { display: flex; margin-left: 4.500px; }
.apps span { width: 55px; height: 49px; display: flex; justify-content: center; padding-top: 14px; }
.apps svg { width: 30px; height: 30px; }
.apps .xbox, .apps .chrome { width: 36px; height: 36px; margin: -6px -6px 0 0; }
.apps .active { width: 50px; margin: 4px 2.500px 0; height: 45px; padding-top: 10px; border-radius: 5px 5px 0 0; background: #343a42; box-shadow: inset 0 1px #474c53; }
.tray { display: flex; align-items: center; height: 49px; padding-top: 9px; margin-left: auto; padding-right: 23px; }
.t-o { margin-left: 25px; }
.t-c { margin-left: 22px; }
.lang { width: 40px; margin-left: 17px; text-align: center; }
.t-w { margin-left: 18px; }
.t-v { margin-left: 9px; }
.t-b { margin-left: 10px; }
.clock { width: 97px; text-align: right; }
.tray > svg { margin-bottom: 2px; }
```
